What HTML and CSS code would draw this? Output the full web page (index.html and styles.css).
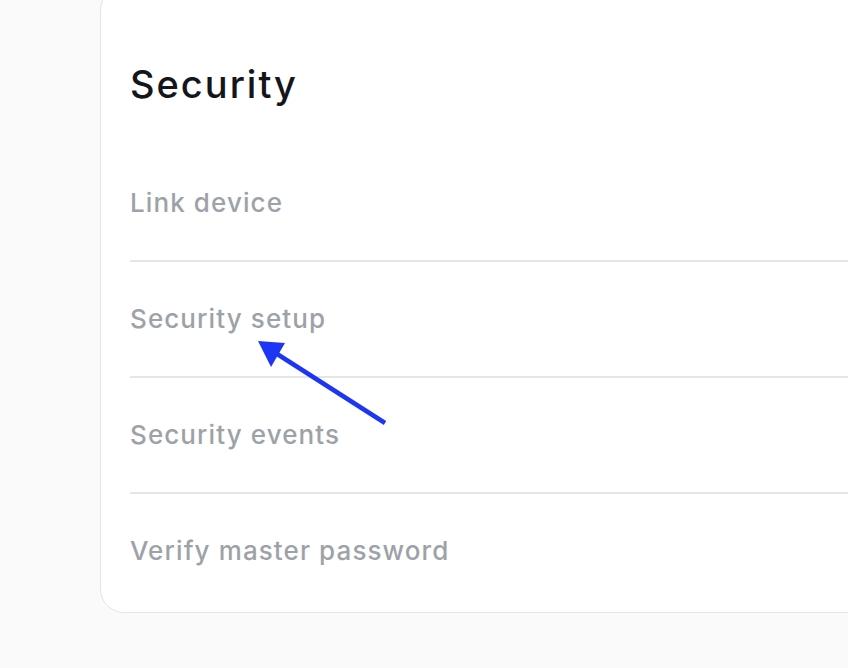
FILE: index.html
```html
<!DOCTYPE html>
<html>
<head>
<meta charset="utf-8">
<link rel="stylesheet" href="styles.css">
</head>
<body>
<div class="page">
  <section class="card">
    <h1 class="title">Security</h1>
    <ul class="menu">
      <li class="item">Link device</li>
      <li class="item">Security setup</li>
      <li class="item">Security events</li>
      <li class="item">Verify master password</li>
    </ul>
  </section>
</div>
<svg class="arrow" width="848" height="668" viewBox="0 0 848 668">
  <line x1="385" y1="423" x2="274" y2="352" stroke="#1c36f3" stroke-width="4.5" stroke-linecap="butt"/>
  <polygon points="258,341 285,343 271,367" fill="#1c36f3"/>
</svg>
</body>
</html>
```
FILE: styles.css
```css
html, body {
  margin: 0;
  padding: 0;
  background: #fafafa;
  overflow: hidden;
  width: 848px;
  height: 668px;
}
body {
  font-family: Inter, "Noto Sans", sans-serif;
  position: relative;
}
.page {
  padding-left: 100px;
  overflow: hidden;
}
.card {
  margin-top: -14px;
  margin-right: -40px;
  background: #ffffff;
  border: 1px solid #e4e4e4;
  border-radius: 24px;
  padding: 75px 0 2px 29px;
}
.title {
  margin: 0 0 40px 0;
  font-size: 38px;
  line-height: 44px;
  font-weight: 500;
  letter-spacing: 2px;
  color: #15161a;
}
.menu {
  list-style: none;
  margin: 0;
  padding: 0;
}
.item {
  padding: 41px 0 41px 0;
  font-size: 26px;
  line-height: 32px;
  font-weight: 500;
  letter-spacing: 1.1px;
  color: #9da2a8;
  border-bottom: 2px solid #e6e6e6;
}
.item:last-child {
  border-bottom: none;
  padding-bottom: 43px;
}
.arrow {
  position: absolute;
  left: 0;
  top: 0;
  pointer-events: none;
}
```
